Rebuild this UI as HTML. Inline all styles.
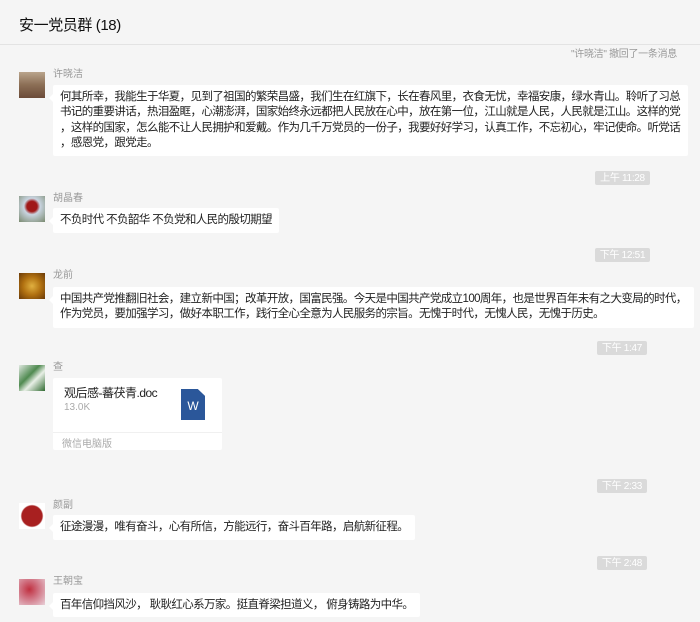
<!DOCTYPE html>
<html><head><meta charset="utf-8"><style>
body{margin:0;width:700px;height:622px;background:#f5f5f5;overflow:hidden;position:relative;font-family:"Liberation Sans","Noto Sans CJK SC",sans-serif;}
.a{position:absolute}
.hdr{position:absolute;left:0;top:0;width:700px;height:44px;border-bottom:1px solid #e3e3e3;background:#f5f5f5}
.title{position:absolute;left:19px;top:14px;font-size:15px;letter-spacing:-0.4px;color:#111}
.av{position:absolute;left:19px;width:26px;height:26px}
.nm{position:absolute;left:53px;font-size:10px;color:#999;line-height:12px}
.bb{position:absolute;left:53px;background:#fff;border-radius:2px;font-size:11.5px;letter-spacing:-0.62px;color:#222;line-height:15.3px;padding:5px 7px 5px 7px;white-space:nowrap}
.bb:before{content:"";position:absolute;left:-4px;top:9px;border:4px solid transparent;border-left:0;border-right-color:#fff}
.tm{position:absolute;background:#dadada;color:#fff;font-size:10px;height:14px;line-height:16px;border-radius:2px;text-align:center;white-space:nowrap;letter-spacing:-0.3px;overflow:hidden}
</style></head><body>
<div class="hdr"><div class="title">安一党员群 (18)</div></div>
<div class="a" style="left:571px;top:45px;font-size:10px;color:#999;letter-spacing:-0.3px">"许晓洁" 撤回了一条消息</div>

<div class="av" style="top:72px;background:linear-gradient(180deg,#b9a48c 0%,#8b6e55 50%,#6b4a38 100%)"></div>
<div class="nm" style="top:69px">许晓洁</div>
<div class="bb" style="top:85px;width:621px;height:61px">何其所幸，我能生于华夏，见到了祖国的繁荣昌盛，我们生在红旗下，长在春风里，衣食无忧，幸福安康，绿水青山。聆听了习总<br>书记的重要讲话，热泪盈眶，心潮澎湃，国家始终永远都把人民放在心中，放在第一位，江山就是人民，人民就是江山。这样的党<br>，这样的国家，怎么能不让人民拥护和爱戴。作为几千万党员的一份子，我要好好学习，认真工作，不忘初心，牢记使命。听党话<br>，感恩党，跟党走。</div>

<div class="tm" style="left:595px;top:171px;width:55px">上午 11:28</div>
<div class="av" style="top:196px;background:radial-gradient(circle at 50% 40%,#a01818 0%,#a01818 25%,#c9d4e0 40%,#7a8a70 100%)"></div>
<div class="nm" style="top:193px">胡晶春</div>
<div class="bb" style="top:208px;height:15px">不负时代 不负韶华 不负党和人民的殷切期望</div>

<div class="tm" style="left:595px;top:248px;width:55px">下午 12:51</div>
<div class="av" style="top:273px;background:radial-gradient(circle at 50% 50%,#e0b040 0%,#b07010 50%,#6a3a08 100%)"></div>
<div class="nm" style="top:270px">龙前</div>
<div class="bb" style="top:287px;height:31px">中国共产党推翻旧社会，建立新中国；改革开放，国富民强。今天是中国共产党成立100周年，也是世界百年未有之大变局的时代，<br>作为党员，要加强学习，做好本职工作，践行全心全意为人民服务的宗旨。无愧于时代，无愧人民，无愧于历史。</div>

<div class="tm" style="left:597px;top:341px;width:50px">下午 1:47</div>
<div class="av" style="top:365px;background:linear-gradient(135deg,#dfe8e0 0%,#4f8a50 40%,#e8efe6 60%,#2f6a30 100%)"></div>
<div class="nm" style="top:362px">查</div>
<div class="a" style="left:53px;top:378px;width:169px;height:72px;background:#fff;border-radius:2px">
  <div class="a" style="left:11px;top:6px;font-size:12px;letter-spacing:-0.5px;color:#222;white-space:nowrap">观后感-蕃茯青.doc</div>
  <div class="a" style="left:11px;top:24px;font-size:10px;color:#aaa">13.0K</div>
  <div class="a" style="left:128px;top:11px;width:24px;height:31px;background:#2b579a;clip-path:polygon(0 0,70% 0,100% 22%,100% 100%,0 100%)"></div>
  <div class="a" style="left:128px;top:21px;width:24px;text-align:center;color:#fff;font-size:12px">W</div>
  <div class="a" style="left:0;top:54px;width:169px;border-top:1px solid #f0f0f0"></div>
  <div class="a" style="left:9px;top:57px;font-size:10px;color:#aaa">微信电脑版</div>
</div>

<div class="tm" style="left:597px;top:479px;width:50px">下午 2:33</div>
<div class="av" style="top:503px;background:radial-gradient(circle at 50% 50%,#a82020 0%,#a82020 55%,#fff 62%)"></div>
<div class="nm" style="top:500px">颜副</div>
<div class="bb" style="top:515px;height:15px">征途漫漫，唯有奋斗，心有所信，方能远行，奋斗百年路，启航新征程。</div>

<div class="tm" style="left:597px;top:556px;width:50px">下午 2:48</div>
<div class="av" style="top:579px;background:radial-gradient(circle at 40% 40%,#c03040 0%,#d07080 40%,#e8d0d8 100%)"></div>
<div class="nm" style="top:576px">王朝宝</div>
<div class="bb" style="top:593px;height:14px">百年信仰挡风沙， 耿耿红心系万家。挺直脊梁担道义， 俯身铸路为中华。</div>
</body></html>
